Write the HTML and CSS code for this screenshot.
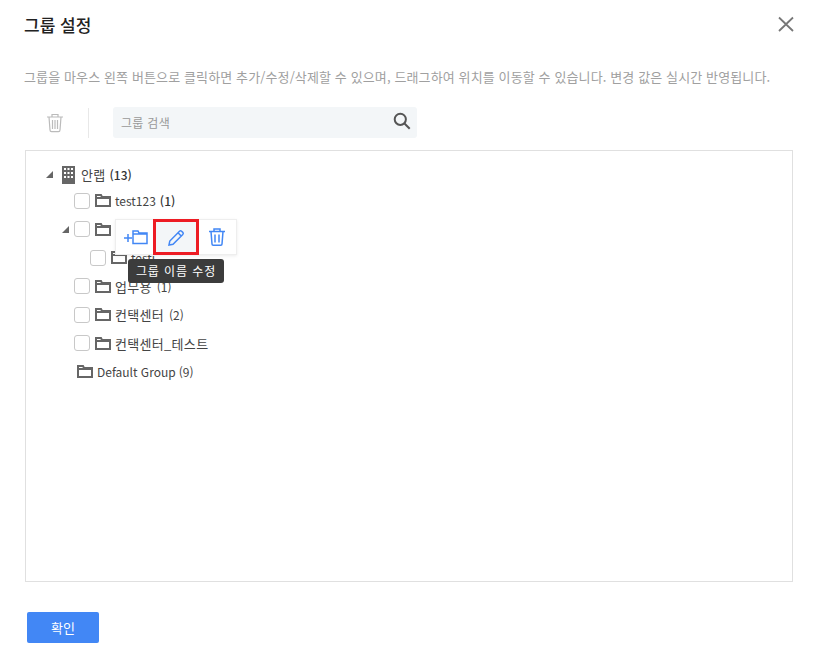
FILE: index.html
```html
<!DOCTYPE html>
<html lang="ko">
<head>
<meta charset="utf-8">
<title>그룹 설정</title>
<link rel="stylesheet" href="styles.css">
</head>
<body>
<div class="dialog">
  <header class="head">
    <h1 class="title">그룹 설정</h1>
    <svg class="close" width="16" height="16" viewBox="0 0 16 16"><path d="M1 1.500 15 15M15 1.500 1 15" stroke="#777" stroke-width="1.800" fill="none"/></svg>
  </header>
  <p class="desc">그룹을 마우스 왼쪽 버튼으로 클릭하면 추가/수정/삭제할 수 있으며, 드래그하여 위치를 이동할 수 있습니다. 변경 값은 실시간 반영됩니다.</p>
  <div class="toolbar">
    <span class="tool-trash">
      <svg width="18" height="20" viewBox="0 0 18 20" fill="none" stroke="#bbb" stroke-width="1.200"><path d="M1 4h16M6 4V1.500h6V4M3 4l1 13c0 1 .7 1.600 1.600 1.600h6.800c.9 0 1.600-.6 1.600-1.600l1-13M6.500 7v9M9 7v9M11.500 7v9"/></svg>
    </span>
    <span class="divider"></span>
    <div class="search">
      <span class="placeholder">그룹 검색</span>
      <svg width="18" height="18" viewBox="0 0 18 18" fill="none" stroke="#555" stroke-width="2"><circle cx="7.300" cy="7.300" r="5.600"/><path d="m11.500 11.500 5.200 5.200"/></svg>
    </div>
  </div>
  <div class="tree">
    <div class="row root">
      <span class="caret"></span>
      <svg class="building" width="13" height="18" viewBox="0 0 13 18"><rect width="13" height="18" fill="#666"/><g fill="#fff"><rect x="2" y="2" width="2" height="2"/><rect x="5.500" y="2" width="2" height="2"/><rect x="9" y="2" width="2" height="2"/><rect x="2" y="6" width="2" height="2"/><rect x="5.500" y="6" width="2" height="2"/><rect x="9" y="6" width="2" height="2"/><rect x="2" y="10" width="2" height="2"/><rect x="5.500" y="10" width="2" height="2"/><rect x="9" y="10" width="2" height="2"/></g></svg>
      <span class="name ko">안랩</span><span class="count strong">(13)</span>
    </div>
    <div class="row level1">
      <span class="check"></span>
      <svg class="folder" width="16" height="13" viewBox="0 0 16 13"><path d="M1 12V1h5l1 2h8v9zM1 4h14" fill="none" stroke="#666" stroke-width="2"/></svg>
      <span class="name">test123</span><span class="count strong">(1)</span>
    </div>
    <div class="row level1 expanded">
      <span class="caret small"></span>
      <span class="check"></span>
      <svg class="folder" width="16" height="13" viewBox="0 0 16 13"><path d="M1 12V1h5l1 2h8v9zM1 4h14" fill="none" stroke="#666" stroke-width="2"/></svg>
    </div>
    <div class="row level2">
      <span class="check"></span>
      <svg class="folder" width="16" height="13" viewBox="0 0 16 13"><path d="M1 12V1h5l1 2h8v9zM1 4h14" fill="none" stroke="#666" stroke-width="2"/></svg>
      <span class="name">testi</span>
    </div>
    <div class="row level1">
      <span class="check"></span>
      <svg class="folder" width="16" height="13" viewBox="0 0 16 13"><path d="M1 12V1h5l1 2h8v9zM1 4h14" fill="none" stroke="#666" stroke-width="2"/></svg>
      <span class="name ko">업무용</span><span class="count">(1)</span>
    </div>
    <div class="row level1">
      <span class="check"></span>
      <svg class="folder" width="16" height="13" viewBox="0 0 16 13"><path d="M1 12V1h5l1 2h8v9zM1 4h14" fill="none" stroke="#666" stroke-width="2"/></svg>
      <span class="name ko">컨택센터</span><span class="count">(2)</span>
    </div>
    <div class="row level1">
      <span class="check"></span>
      <svg class="folder" width="16" height="13" viewBox="0 0 16 13"><path d="M1 12V1h5l1 2h8v9zM1 4h14" fill="none" stroke="#666" stroke-width="2"/></svg>
      <span class="name ko">컨택센터_테스트</span>
    </div>
    <div class="row default">
      <svg class="folder" width="16" height="13" viewBox="0 0 16 13"><path d="M1 12V1h5l1 2h8v9zM1 4h14" fill="none" stroke="#666" stroke-width="2"/></svg>
      <span class="name">Default Group</span><span class="count tight">(9)</span>
    </div>
    <div class="menu">
      <span class="menu-item add">
        <svg width="24" height="16" viewBox="0 0 24 16" fill="none" stroke="#4287f5" stroke-width="1.500"><path d="M0 9h8M4 5v8"/><path d="M9 14.500V2h5l1 2h8v10.500zM9 5h14"/></svg>
      </span>
      <span class="menu-item active">
        <svg width="17" height="17" viewBox="0 0 17 17" fill="none" stroke="#4287f5" stroke-width="1.500"><path d="M1 16l.8-4L11.500 2.200a1.500 1.500 0 0 1 2.100 0l1.200 1.200a1.500 1.500 0 0 1 0 2.100L5 15.200zM10 3.800l3.200 3.200"/></svg>
      </span>
      <span class="menu-item">
        <svg width="16" height="18" viewBox="0 0 16 18" fill="none" stroke="#4287f5" stroke-width="1.500"><path d="M0 3.500h16M5 3.500V1h6v2.500M2 3.500l1 12.500c0 .7.500 1.200 1.200 1.200h7.600c.7 0 1.200-.5 1.200-1.200l1-12.500M6 6.500v8M10 6.500v8"/></svg>
      </span>
    </div>
    <div class="tooltip">그룹 이름 수정</div>
  </div>
  <button class="ok" type="button">확인</button>
</div>
</body>
</html>
```
FILE: styles.css
```css
* { box-sizing: border-box; }
html, body { margin: 0; padding: 0; background: #fff; }
body {
  width: 818px;
  height: 670px;
  overflow: hidden;
  font-family: "Noto Sans CJK KR", "Noto Sans", sans-serif;
  color: #444;
}
.dialog { padding: 0 25px; }
.head {
  display: flex;
  align-items: center;
  justify-content: space-between;
  height: 50px;
}
.title {
  margin: 0 0 0 -1px;
  font-size: 17px;
  line-height: 50px;
  font-weight: 500;
  color: #222;
}
.close { margin-right: -1px; margin-top: -3px; }
.desc {
  margin: 17px 0 0 -1px;
  height: 20px;
  font-size: 13px;
  line-height: 20px;
  letter-spacing: 0.12px;
  color: #a0a0a0;
  white-space: nowrap;
}
.toolbar {
  display: flex;
  align-items: center;
  height: 31px;
  margin-top: 20px;
}
.tool-trash { display: flex; width: 38px; justify-content: flex-end; }
.tool-trash svg { margin-right: -1px; margin-top: 1px; }
.divider { width: 1px; height: 30px; background: #e8e8e8; margin-left: 25px; }
.search {
  display: flex;
  align-items: center;
  justify-content: space-between;
  width: 304px;
  height: 31px;
  margin-left: 24px;
  padding: 0 6px 0 8px;
  background: #f3f6f8;
  border-radius: 3px;
}
.search svg { margin-top: -3px; }
.placeholder { font-size: 12px; letter-spacing: 0.3px; color: #999; }
.tree {
  position: relative;
  width: 768px;
  height: 432px;
  margin-top: 12px;
  padding-top: 12px;
  border: 1px solid #e0e0e0;
}
.row {
  display: flex;
  align-items: center;
  height: 28.500px;
  font-size: 12px;
  color: #444;
  white-space: nowrap;
}
.row.root { height: 23.500px; padding-left: 20px; }
.level1 { padding-left: 48px; }
.level1.expanded { padding-left: 36px; }
.level2 { padding-left: 64px; }
.default { padding-left: 51px; }
.caret {
  width: 0;
  height: 0;
  margin-right: 9px;
  border-style: solid;
  border-width: 0 0 7px 7px;
  border-color: transparent transparent #666 transparent;
}
.caret.small { margin-right: 5px; }
.building { margin-right: 6px; }
.check {
  width: 16px;
  height: 16px;
  margin-right: 5px;
  background: #fff;
  border: 1px solid #c8c8c8;
  border-radius: 3px;
}
.folder { margin-right: 4px; flex: none; }
.name.ko { font-size: 13px; letter-spacing: 0.3px; }
.count { margin-left: 5px; }
.count.tight { margin-left: 3px; }
.count.strong { margin-left: 4px; font-weight: 500; color: #333; }
.menu {
  position: absolute;
  left: 89px;
  top: 68px;
  display: flex;
  width: 122px;
  height: 36px;
  background: #fff;
  border: 1px solid #eee;
  box-shadow: 0 1px 3px rgba(0, 0, 0, .08);
}
.menu-item {
  display: flex;
  align-items: center;
  justify-content: center;
  width: 38px;
  height: 34px;
}
.menu-item.add { padding-left: 2px; }
.menu-item.active {
  width: 46px;
  height: 36px;
  margin-top: -1px;
  background: #f3f6f8;
  border: 3px solid #ed1c24;
}
.tooltip {
  position: absolute;
  left: 102px;
  top: 108px;
  width: 96px;
  height: 24px;
  background: #3c3c3c;
  color: #fff;
  font-size: 12px;
  line-height: 24px;
  text-align: center;
  letter-spacing: 0.9px;
  border-radius: 3px;
}
.ok {
  display: block;
  width: 72px;
  height: 31px;
  margin: 30px 0 0 2px;
  padding: 0;
  background: #4287f5;
  border: 0;
  border-radius: 2px;
  color: #fff;
  font-family: inherit;
  font-size: 13px;
}
```
